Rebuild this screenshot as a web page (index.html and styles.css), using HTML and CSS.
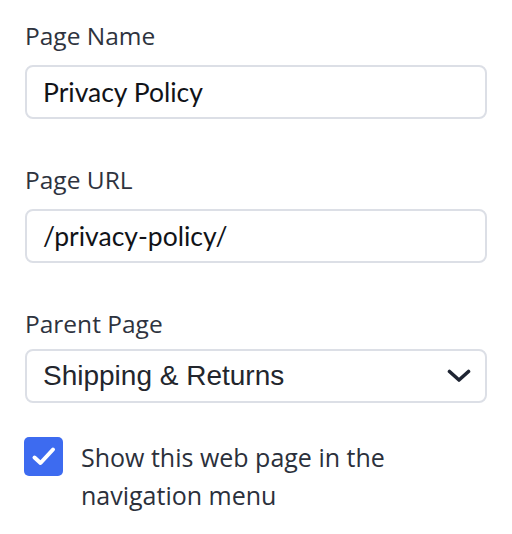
FILE: index.html
```html
<!DOCTYPE html>
<html>
<head>
<meta charset="utf-8">
<link rel="stylesheet" href="styles.css">
</head>
<body>
<form class="form">
  <div class="field">
    <label class="label">Page Name</label>
    <div class="input">Privacy Policy</div>
  </div>
  <div class="field">
    <label class="label">Page URL</label>
    <div class="input">/privacy-policy/</div>
  </div>
  <div class="field field-select">
    <label class="label label-select">Parent Page</label>
    <div class="select">
      <span class="select-text">Shipping &amp; Returns</span>
      <svg class="chevron" width="24" height="14" viewBox="0 0 24 14"><path d="M2.5 2.5 L12 11 L21.5 2.5" fill="none" stroke="#1f2533" stroke-width="3.6" stroke-linecap="round" stroke-linejoin="round"/></svg>
    </div>
  </div>
  <div class="check-row">
    <span class="checkbox"><svg width="39" height="39" viewBox="0 0 39 39"><path d="M10.5 20.5 L16.5 26 L29 12.5" fill="none" stroke="#fff" stroke-width="4" stroke-linecap="round" stroke-linejoin="round"/></svg></span>
    <span class="check-label">Show this web page in the navigation menu</span>
  </div>
</form>
</body>
</html>
```

FILE: styles.css
```css
html, body {
  margin: 0;
  padding: 0;
  background: #ffffff;
}
body {
  font-family: "Open Sans", "Noto Sans", sans-serif;
}
.form {
  padding: 20px 25px 0 25px;
  display: flex;
  flex-direction: column;
}
.field {
  display: flex;
  flex-direction: column;
  margin-bottom: 45px;
}
.label {
  font-size: 24.5px;
  line-height: 32px;
  color: #2e333e;
  margin-bottom: 13px;
}
.label-select {
  margin-bottom: 9px;
}
.input, .select {
  box-sizing: border-box;
  height: 54px;
  border: 2px solid #dcdfe6;
  border-radius: 8px;
  padding: 0 14px 0 16px;
  display: flex;
  align-items: center;
  font-family: "Lato", "Open Sans", sans-serif;
  font-size: 26.5px;
  color: #111318;
}
.select {
  justify-content: space-between;
  font-family: "Liberation Sans", Arial, sans-serif;
  font-size: 28px;
  color: #23262d;
}
.field-select {
  margin-bottom: 34px;
}
.chevron {
  display: block;
}
.check-row {
  display: flex;
  align-items: flex-start;
  gap: 18px;
}
.checkbox {
  flex: none;
  width: 39px;
  height: 39px;
  border-radius: 5px;
  background: #3d6bf0;
  margin-left: -1px;
}
.checkbox svg {
  display: block;
}
.check-label {
  font-size: 25px;
  line-height: 38px;
  color: #2b303b;
  margin-top: 1px;
  max-width: 330px;
}
```
